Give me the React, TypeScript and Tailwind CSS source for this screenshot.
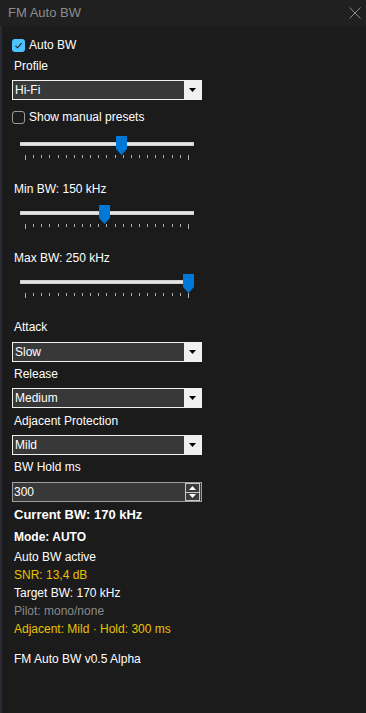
import React from "react";

const font = { fontFamily: '"Liberation Sans", Arial, sans-serif' };

function CheckBox({ checked, label }: { checked: boolean; label: string }) {
  return (
    <div className="flex h-[18px] items-center">
      {checked ? (
        <span className="flex h-[13px] w-[13px] items-center justify-center rounded-[3px] bg-[#4cc2ff]">
          <svg width="9" height="9" viewBox="0 0 9 9">
            <path d="M1.5 4.8 L3.6 6.8 L7.6 2.2" fill="none" stroke="#1b1b1b" strokeWidth="1.1" />
          </svg>
        </span>
      ) : (
        <span className="h-[13px] w-[13px] rounded-[3px] border border-[#9a9a9a]" />
      )}
      <span className="ml-[4px] text-[12px] text-white">{label}</span>
    </div>
  );
}

function Select({ value, className }: { value: string; className?: string }) {
  return (
    <div className={"flex h-[20px] w-[190px] border border-[#f0f0f0] bg-[#383838] " + (className ?? "")}>
      <div className="flex flex-1 items-center pl-[2px] text-[12px] text-white">{value}</div>
      <div className="flex w-[17px] items-center justify-center bg-[#f0f0f0]">
        <svg width="7" height="4" viewBox="0 0 7 4">
          <path d="M0 0 H7 L3.5 4 Z" fill="#000" />
        </svg>
      </div>
    </div>
  );
}

function Slider({ left, className }: { left: string; className?: string }) {
  return (
    <div className={"relative ml-[8px] h-[28px] w-[174px] " + (className ?? "")}>
      <div className="absolute left-0 right-0 top-[8px] h-[4px] border border-[#cfcfcf] bg-[#e6e6e6]" />
      <svg className={"absolute top-[2px] " + left} width="11" height="19" viewBox="0 0 11 19">
        <path d="M0 0 H11 V13 L5.5 19 L0 13 Z" fill="#0078d7" />
      </svg>
      <div className="absolute left-[5px] top-[21px] flex w-[164px] justify-between">
        {Array.from({ length: 21 }).map((_, i) => (
          <span
            key={i}
            className={i === 0 || i === 20 ? "h-[5px] w-px bg-[#b0b0b0]" : "h-[3px] w-px bg-[#b0b0b0]"}
          />
        ))}
      </div>
    </div>
  );
}

function Label({
  children,
  className,
  color = "text-white",
}: {
  children: React.ReactNode;
  className?: string;
  color?: string;
}) {
  return (
    <div className={"flex h-[18px] items-center pl-[2px] text-[12px] " + color + " " + (className ?? "")}>
      {children}
    </div>
  );
}

export default function App() {
  return (
    <div className="flex h-[713px] w-[366px] flex-col bg-[#1b1b1b]" style={font}>
      <div className="flex h-[26px] items-center justify-between bg-[#202020] pl-[8px] pr-[5px]">
        <span className="text-[13px] text-[#8c8c8c]">FM Auto BW</span>
        <svg width="12" height="12" viewBox="0 0 12 12">
          <path d="M0.5 0.5 L11.5 11.5 M11.5 0.5 L0.5 11.5" stroke="#8c8c8c" strokeWidth="1" />
        </svg>
      </div>
      <div className="flex flex-1 flex-col border-l-2 border-[#2a2a36] pl-[10px] pt-[10px]">
        <CheckBox checked label="Auto BW" />
        <Label className="mt-[3px]">Profile</Label>
        <Select value="Hi-Fi" className="mt-[5px]" />
        <div className="mt-[8px]">
          <CheckBox checked={false} label="Show manual presets" />
        </div>
        <Slider left="left-[96px]" className="mt-[8px]" />
        <Label className="mt-[18px]">Min BW: 150 kHz</Label>
        <Slider left="left-[79px]" className="mt-[5px]" />
        <Label className="mt-[18px]">Max BW: 250 kHz</Label>
        <Slider left="left-[163px]" className="mt-[5px]" />
        <Label className="mt-[18px]">Attack</Label>
        <Select value="Slow" className="mt-[6px]" />
        <Label className="mt-[3px]">Release</Label>
        <Select value="Medium" className="mt-[5px]" />
        <Label className="mt-[4px]">Adjacent Protection</Label>
        <Select value="Mild" className="mt-[5px]" />
        <Label className="mt-[3px]">BW Hold ms</Label>
        <div className="mt-[6px] flex h-[20px] w-[190px] items-center border border-[#a0a0a0] bg-[#383838] pr-[1px]">
          <span className="flex-1 pl-[1px] text-[12px] text-white">300</span>
          <div className="flex h-[18px] w-[15px] flex-col border border-[#c8c8c8]">
            <div className="flex flex-1 items-center justify-center border-b border-[#c8c8c8] bg-[#3c3c3c]">
              <svg width="7" height="4" viewBox="0 0 7 4">
                <path d="M0 4 H7 L3.5 0 Z" fill="#fff" />
              </svg>
            </div>
            <div className="flex flex-1 items-center justify-center bg-[#3c3c3c]">
              <svg width="7" height="4" viewBox="0 0 7 4">
                <path d="M0 0 H7 L3.5 4 Z" fill="#fff" />
              </svg>
            </div>
          </div>
        </div>
        <div className="mt-[3px] flex h-[20px] items-center pl-[2px] text-[13px] font-bold text-white">
          Current BW: 170 kHz
        </div>
        <div className="mt-[3px] flex h-[18px] items-center pl-[2px] text-[12px] font-bold text-white">
          Mode: AUTO
        </div>
        <Label className="mt-[2px]">Auto BW active</Label>
        <Label color="text-[#e8c200]">SNR: 13,4 dB</Label>
        <Label>Target BW: 170 kHz</Label>
        <Label color="text-[#8a8a8a]">Pilot: mono/none</Label>
        <Label color="text-[#e8c200]">Adjacent: Mild · Hold: 300 ms</Label>
        <Label className="mt-[12px]">FM Auto BW v0.5 Alpha</Label>
      </div>
    </div>
  );
}
